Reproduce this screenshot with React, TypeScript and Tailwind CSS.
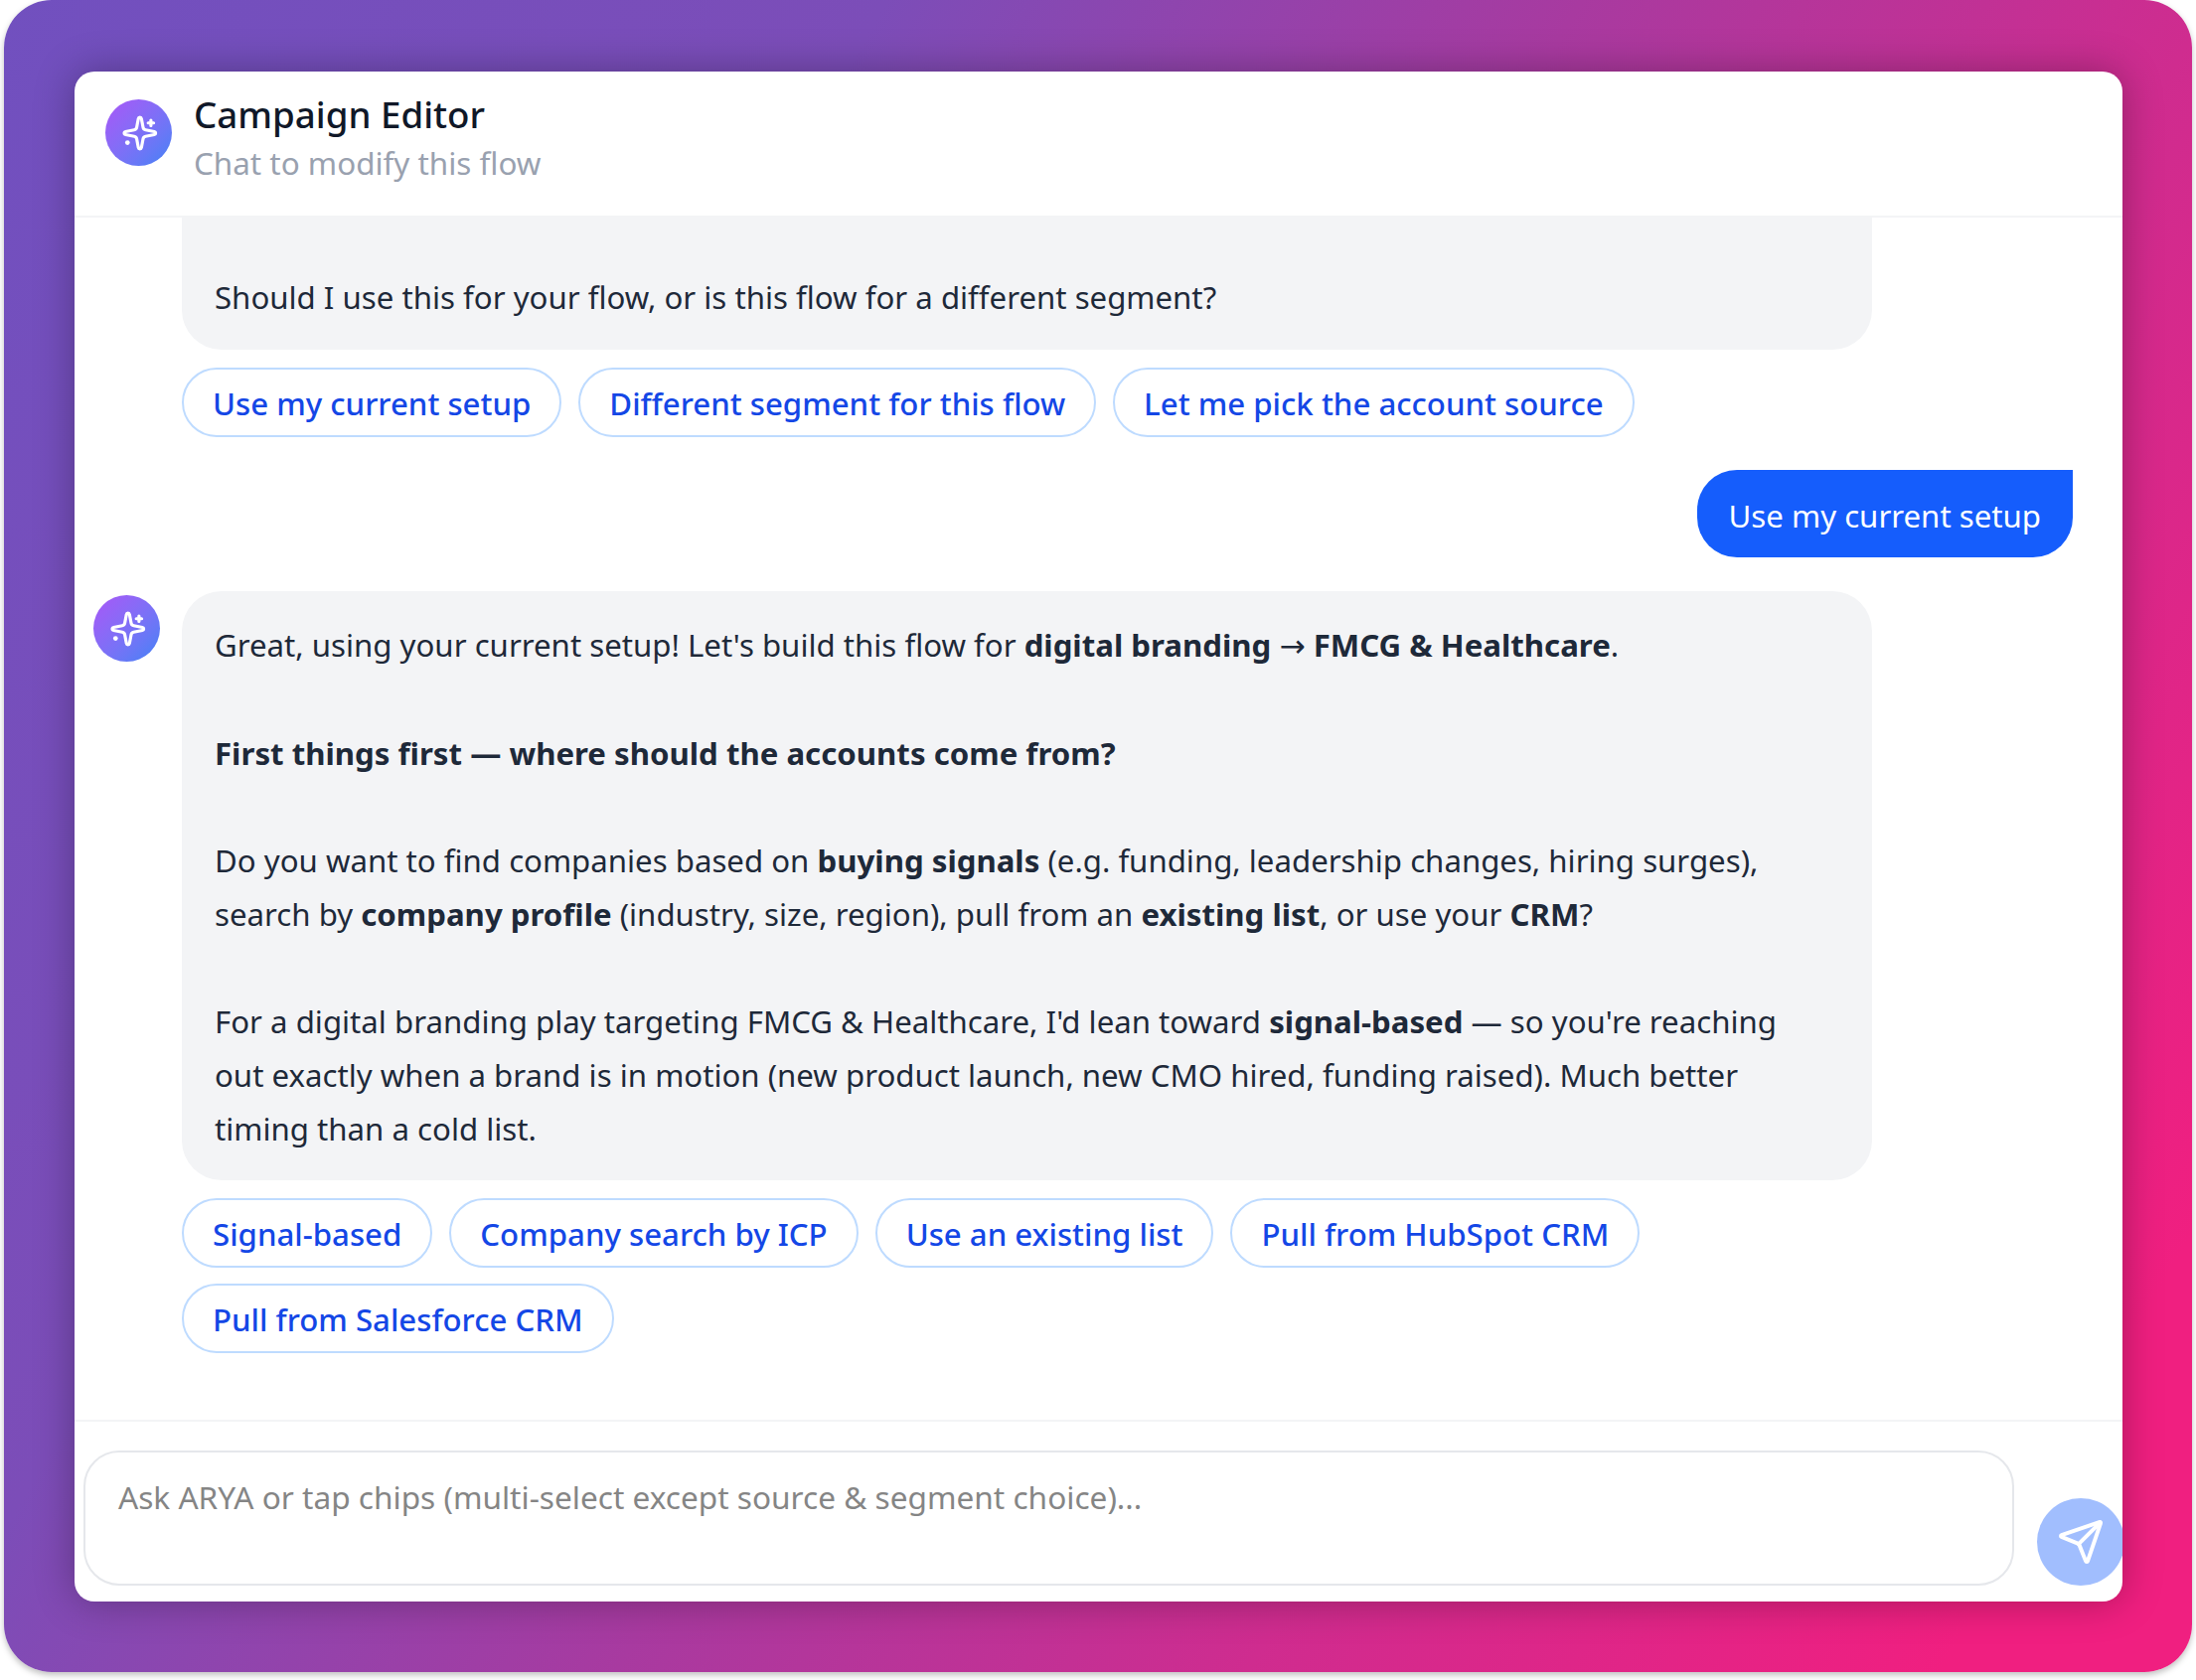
import React from 'react';
import { Send } from 'lucide-react';

const SparkleIcon = () => (
  <svg viewBox="0 0 24 24" className="h-[38px] w-[38px]" fill="none" stroke="currentColor" strokeWidth={2} strokeLinecap="round" strokeLinejoin="round">
    <path d="M11.017 2.814a1 1 0 0 1 1.966 0l1.051 5.558a2 2 0 0 0 1.594 1.594l5.558 1.051a1 1 0 0 1 0 1.966l-5.558 1.051a2 2 0 0 0-1.594 1.594l-1.051 5.558a1 1 0 0 1-1.966 0l-1.051-5.558a2 2 0 0 0-1.594-1.594l-5.558-1.051a1 1 0 0 1 0-1.966l5.558-1.051a2 2 0 0 0 1.594-1.594z" transform="translate(0.5 0)" />
    <path d="M19.5 3.8v3.4M17.8 5.5h3.4" />
    <circle cx="4.6" cy="18" r="1.5" fill="currentColor" stroke="none" />
  </svg>
);

const Avatar = () => (
  <div className="flex h-[67px] w-[67px] shrink-0 items-center justify-center rounded-full bg-gradient-to-br from-[#a855f7] to-[#3b82f6] text-white">
    <SparkleIcon />
  </div>
);

const Chip = ({ label }: { label: string }) => (
  <button className="h-[70px] rounded-full border-2 border-[#bedbff] bg-white px-[29px] pt-[1px] text-[#1447e6] font-medium whitespace-nowrap">
    {label}
  </button>
);

const App = () => {
  return (
    <div className="h-[1691px] w-[2210px] overflow-hidden bg-white font-['Noto_Sans',sans-serif] text-[31.2px] leading-[54px] text-[#1e2939]">
      <div className="ml-[4px] h-[1683px] w-[2202px] rounded-[48px] bg-[linear-gradient(120deg,#7150bf_0%,#7c4db8_28%,#a83aa0_50%,#cf2c8f_70%,#f01f80_92%)] pb-[71px] pl-[71px] pr-[70px] pt-[72px] shadow-[0_3px_6px_rgba(0,0,0,0.25)]">
        <div className="flex h-full flex-col overflow-hidden rounded-[20px] bg-white shadow-[0_0_40px_rgba(0,0,0,0.3)]">
          {/* Header */}
          <div className="flex h-[147px] shrink-0 items-start gap-[22px] border-b-2 border-[#f3f4f6] pl-[31px] pt-[19px]">
            <div className="pt-[9px]">
              <Avatar />
            </div>
            <div>
              <div className="text-[36.7px] font-medium leading-[48px] text-[#101828]">Campaign Editor</div>
              <div className="text-[31.4px] leading-[49px] text-[#99a1af]">Chat to modify this flow</div>
            </div>
          </div>

          {/* Messages */}
          <div className="flex min-h-0 flex-1 flex-col justify-end overflow-hidden pb-[67px] pl-[19px] pr-[50px]">
            <div className="ml-[89px] w-[1701px] shrink-0 rounded-[40px] bg-[#f3f4f6] px-[33px] pb-[26px] pt-[200px]">
              Should I use this for your flow, or is this flow for a different segment?
            </div>
            <div className="ml-[89px] mt-[18px] flex gap-[17px]">
              <Chip label="Use my current setup" />
              <Chip label="Different segment for this flow" />
              <Chip label="Let me pick the account source" />
            </div>

            <div className="mt-[33px] flex justify-end">
              <div className="flex h-[88px] items-center rounded-[40px] rounded-tr-none bg-[#155dfc] px-[32px] pt-[3px] text-white">
                Use my current setup
              </div>
            </div>

            <div className="mt-[34px] flex gap-[22px]">
              <div className="pt-[4px]">
                <Avatar />
              </div>
              <div className="w-[1701px] rounded-[40px] bg-[#f3f4f6] pb-[25px] pl-[33px] pr-[20px] pt-[27px]">
                Great, using your current setup! Let's build this flow for <b>digital branding <span className="font-['DejaVu_Sans',sans-serif] font-normal">→</span> FMCG &amp; Healthcare</b>.
                <br />
                <br />
                <b>First things first — where should the accounts come from?</b>
                <br />
                <br />
                Do you want to find companies based on <b>buying signals</b> (e.g. funding, leadership changes, hiring surges),
                <br />
                search by <b>company profile</b> (industry, size, region), pull from an <b>existing list</b>, or use your <b>CRM</b>?
                <br />
                <br />
                For a digital branding play targeting FMCG &amp; Healthcare, I'd lean toward <b>signal-based</b> — so you're reaching
                <br />
                out exactly when a brand is in motion (new product launch, new CMO hired, funding raised). Much better
                <br />
                timing than a cold list.
              </div>
            </div>
            <div className="ml-[89px] mt-[18px] flex w-[1701px] flex-wrap gap-x-[17px] gap-y-[16px]">
              <Chip label="Signal-based" />
              <Chip label="Company search by ICP" />
              <Chip label="Use an existing list" />
              <Chip label="Pull from HubSpot CRM" />
              <Chip label="Pull from Salesforce CRM" />
            </div>
          </div>

          {/* Composer */}
          <div className="flex h-[183px] shrink-0 items-end gap-[23px] border-t-2 border-[#f3f4f6] pb-[16px] pl-[9px]">
            <div className="h-[136px] w-[1943px] shrink-0 rounded-[36px] border-2 border-[#e5e7eb] pl-[33px] pt-[18px] text-[31.6px] text-[#858585]">
              Ask ARYA or tap chips (multi-select except source &amp; segment choice)...
            </div>
            <button className="flex h-[88px] w-[88px] shrink-0 items-center justify-center rounded-full bg-[#155dfc]/40 text-white">
              <Send className="h-[48px] w-[48px]" strokeWidth={2} />
            </button>
          </div>
        </div>
      </div>
    </div>
  );
};

export default App;
